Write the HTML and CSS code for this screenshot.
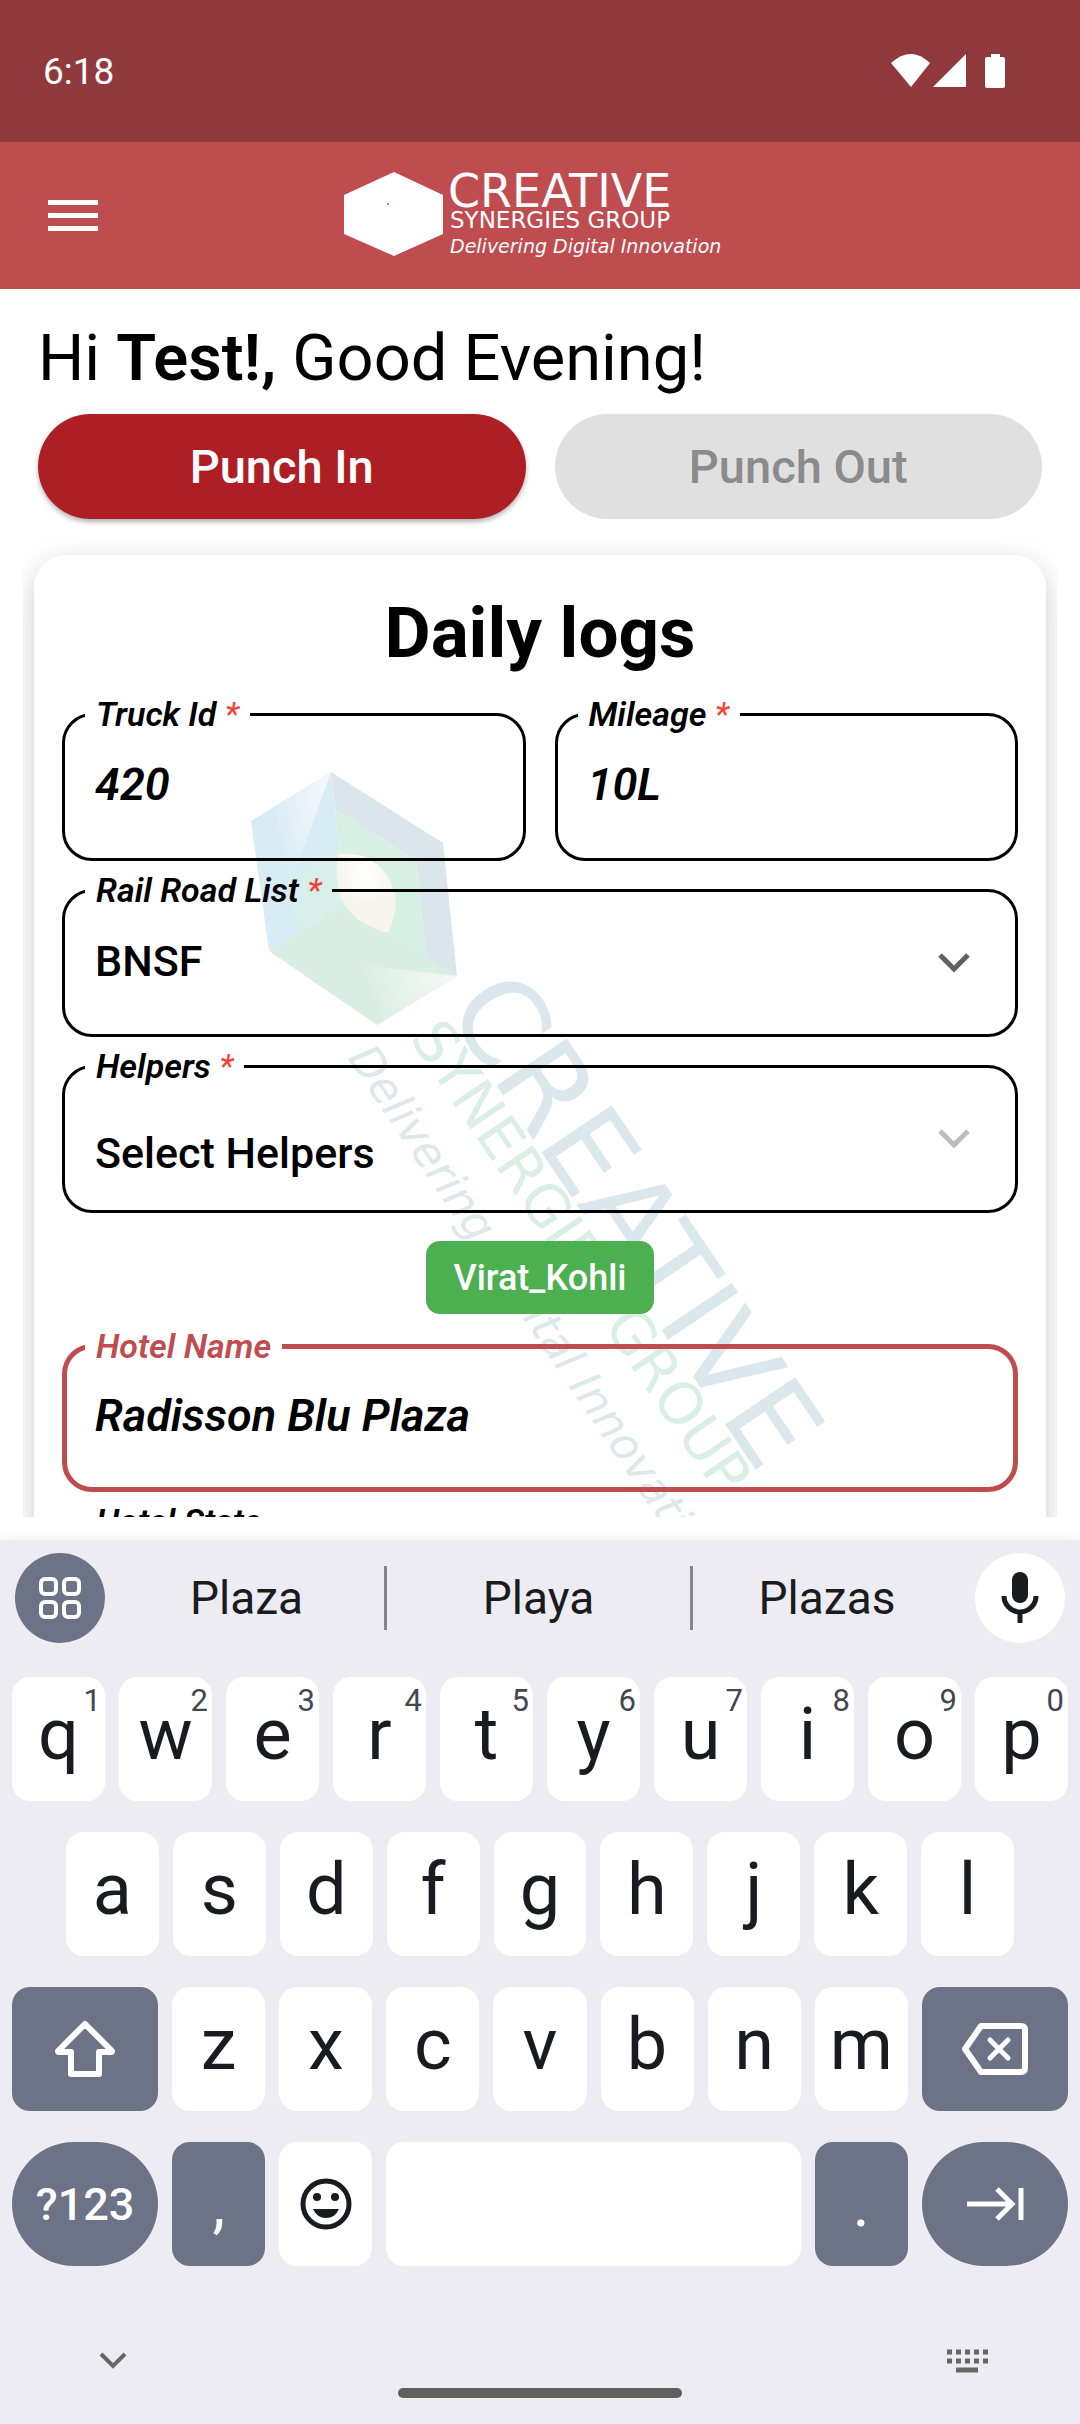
FILE: index.html
```html
<!DOCTYPE html>
<html lang="en">
<head>
<meta charset="utf-8">
<meta name="viewport" content="width=device-width">
<title>Daily logs</title>
<link rel="stylesheet" href="styles.css">
</head>
<body>
<div class="status">
  <span>6:18</span>
  <svg class="status-icons" width="116" height="36" viewBox="0 0 116 36" fill="#fff" aria-hidden="true">
    <path d="M0 10Q20-8 39 10L20 34Z"/>
    <path d="M75 1V34H42Z"/>
    <path d="M100 1h9v3h3q2 0 2 2v27q0 2-2 2H96q-2 0-2-2V6q0-2 2-2h4z"/>
  </svg>
</div>
<header class="appbar">
  <button class="menu" aria-label="Menu"><i></i><i></i><i></i></button>
  <svg class="logo" width="392" height="90" viewBox="0 0 392 90" fill="#fff" role="img">
    <path d="M50 1 99 24v39L50 85 0 63V24Z"/>
    <circle cx="44" cy="33" r="1" fill="#bf4c4f"/>
    <text class="brand" x="104" y="36" font-size="46">CREATIVE</text>
    <text class="brand" x="106" y="57" font-size="23">SYNERGIES GROUP</text>
    <text class="brand tagline" x="106" y="82" font-size="19">Delivering Digital Innovation</text>
  </svg>
</header>
<main>
  <h1 class="greeting">Hi <b>Test!,</b> Good Evening!</h1>
  <div class="punch">
    <button class="pill pill-in">Punch In</button>
    <button class="pill pill-out" disabled>Punch Out</button>
  </div>
  <div class="scroller">
    <form class="card">
      <svg class="watermark" viewBox="0 0 1012 965" aria-hidden="true">
        <defs>
          <linearGradient id="sky" x1="0" y1=".6" x2="1" y2=".3"><stop offset=".3" stop-color="#d8ecf5"/><stop offset="1" stop-color="#f6f7fc"/></linearGradient>
          <linearGradient id="mint" x1="0" y1=".5" x2="1" y2=".3"><stop offset="0" stop-color="#d8eee4"/><stop offset="1" stop-color="#f7f8f4"/></linearGradient>
          <radialGradient id="pearl" cx=".5" cy=".25" r=".5"><stop offset="0" stop-color="#fff"/><stop offset="1" stop-color="#f5f5ee"/></radialGradient>
        </defs>
        <g transform="translate(-34 -555)">
          <path fill="#d8ecf5" d="M251 821 331 772 345 905 269 951Z"/>
          <path fill="url(#sky)" d="M251 821 331 772 302 853 290 880Z"/>
          <path fill="#d8efec" d="M339 850 296 872Q285 905 302 931L345 905Z"/>
          <path fill="#dae6ec" d="M331 772 443 843 457 976 426 957 416 860 335 809Z"/>
          <path fill="#d8f0e3" d="M335 809 416 860 426 957 385 935 345 905Z"/>
          <path fill="#d8eee3" d="M269 951 345 905 388 933 457 976 377 1025Z"/>
          <path fill="url(#mint)" d="M363 965 457 976 384 1020Z"/>
          <path fill="url(#pearl)" d="M338 854Q372 850 390 880 402 905 388 933 355 925 341 899 334 876 338 854Z"/>
          <g class="brand">
            <text transform="translate(445 1009) rotate(56)" font-size="116" fill="#dae7ed">CREATIVE</text>
            <text transform="translate(409 1038) rotate(56)" font-size="58" fill="#daefe3">SYNERGIES GROUP</text>
            <text class="tagline" transform="translate(347 1058) rotate(56)" font-size="44" fill="#dce8ea">Delivering Digital Innovation</text>
          </g>
        </g>
      </svg>
      <h2>Daily logs</h2>
      <div class="pair">
        <fieldset class="field">
          <legend><label for="truck">Truck Id <em>*</em></label></legend>
          <input id="truck" value="420">
        </fieldset>
        <fieldset class="field">
          <legend><label for="mileage">Mileage <em>*</em></label></legend>
          <input id="mileage" value="10L">
        </fieldset>
      </div>
      <fieldset class="field">
        <legend><label for="rail">Rail Road List <em>*</em></label></legend>
        <select id="rail"><option>BNSF</option></select>
        <svg class="chevron" width="36" height="24" viewBox="0 0 36 24"><path d="M4 4 18 18 32 4"/></svg>
      </fieldset>
      <fieldset class="field">
        <legend><label for="helpers">Helpers <em>*</em></label></legend>
        <select id="helpers" class="low"><option>Select Helpers</option></select>
        <svg class="chevron faint" width="36" height="24" viewBox="0 0 36 24"><path d="M4 4 18 18 32 4"/></svg>
      </fieldset>
      <button type="button" class="chip">Virat_Kohli</button>
      <fieldset class="field active">
        <legend><label for="hotel">Hotel Name</label></legend>
        <input id="hotel" value="Radisson Blu Plaza">
      </fieldset>
      <fieldset class="field">
        <legend><label for="state">Hotel State</label></legend>
        <input id="state">
      </fieldset>
    </form>
  </div>
</main>
<section class="keyboard" aria-label="Keyboard">
  <div class="strip">
    <button class="round dark" aria-label="Keyboard menu">
      <svg width="44" height="44" viewBox="0 0 44 44" fill="none" stroke="#fff" stroke-width="4"><rect x="3" y="3" width="15" height="15" rx="4"/><rect x="26" y="3" width="15" height="15" rx="4"/><rect x="3" y="26" width="15" height="15" rx="4"/><rect x="26" y="26" width="15" height="15" rx="4"/></svg>
    </button>
    <div class="words"><button>Plaza</button><button>Playa</button><button>Plazas</button></div>
    <button class="round" aria-label="Voice input">
      <svg width="40" height="52" viewBox="0 0 40 52" fill="none" stroke="#1a1b20" stroke-width="5"><rect x="12" y="0" width="16" height="31" rx="8" fill="#1a1b20" stroke="none"/><path d="M4 24a16 16 0 0 0 32 0M20 40v11"/></svg>
    </button>
  </div>
  <div class="row">
    <button>q<sup>1</sup></button><button>w<sup>2</sup></button><button>e<sup>3</sup></button><button>r<sup>4</sup></button><button>t<sup>5</sup></button><button>y<sup>6</sup></button><button>u<sup>7</sup></button><button>i<sup>8</sup></button><button>o<sup>9</sup></button><button>p<sup>0</sup></button>
  </div>
  <div class="row inset">
    <button>a</button><button>s</button><button>d</button><button>f</button><button>g</button><button>h</button><button>j</button><button>k</button><button>l</button>
  </div>
  <div class="row">
    <button class="dark wide" aria-label="Shift">
      <svg width="62" height="60" viewBox="0 0 62 60" fill="none" stroke="#fff" stroke-width="6" stroke-linejoin="round"><path d="M31 5 58 32Q58 33 57 33H45V55H17V33H5Q4 33 4 32Z"/></svg>
    </button>
    <button>z</button><button>x</button><button>c</button><button>v</button><button>b</button><button>n</button><button>m</button>
    <button class="dark wide" aria-label="Backspace">
      <svg width="68" height="54" viewBox="0 0 68 54" fill="none" stroke="#fff" stroke-width="6" stroke-linejoin="round"><path d="M20 4H60Q64 4 64 8V46Q64 50 60 50H20L4 27Z"/><path stroke-width="5" stroke-linecap="round" d="M29 18 47 36M47 18 29 36"/></svg>
    </button>
  </div>
  <div class="row">
    <button class="dark wide oval">?123</button>
    <button class="dark mark">,</button>
    <button aria-label="Emoji">
      <svg width="54" height="54" viewBox="0 0 54 54" fill="#1a1b20"><circle cx="27" cy="27" r="23" fill="none" stroke="#1a1b20" stroke-width="5"/><circle cx="18" cy="20" r="4"/><circle cx="36" cy="20" r="4"/><path d="M14 32H40Q36 41 27 41T14 32Z"/></svg>
    </button>
    <button class="space" aria-label="Space"></button>
    <button class="dark mark">.</button>
    <button class="dark wide oval" aria-label="Next field">
      <svg width="58" height="36" viewBox="0 0 58 36" fill="none" stroke="#fff" stroke-width="5"><path d="M1 18H46M31 3 46 18 31 33M55 2V34"/></svg>
    </button>
  </div>
  <div class="nav">
    <button aria-label="Hide keyboard"><svg width="28" height="18" viewBox="0 0 28 18" fill="none" stroke="#666" stroke-width="4"><path d="M2 2 14 14 26 2"/></svg></button>
    <button aria-label="Switch keyboard"><svg width="42" height="26" viewBox="0 0 42 26" fill="none" stroke="#666" stroke-width="5"><path stroke-dasharray="5 4" d="M1 4H42M1 13H42"/><path d="M10 22H32"/></svg></button>
  </div>
  <div class="home"></div>
</section>
</body>
</html>
```
FILE: styles.css
```css
* { box-sizing: border-box; }
body {
  margin: 0;
  height: 100vh;
  display: flex;
  flex-direction: column;
  overflow: hidden;
  background: #fff;
  color: #000;
  font-family: Roboto, "Liberation Sans", sans-serif;
}
button, input, select { font: inherit; color: inherit; border: 0; background: none; padding: 0; margin: 0; }
svg { display: block; }

.status {
  flex: none;
  height: 142px;
  padding: 0 73px 0 43px;
  display: flex;
  align-items: center;
  justify-content: space-between;
  background: #8f393c;
  color: #fff;
  font-size: 37px;
}
.appbar {
  flex: none;
  height: 147px;
  padding: 0 48px;
  display: grid;
  grid-template-columns: 1fr auto 1fr;
  align-items: center;
  background: #bf4c4f;
}
.menu { width: 50px; display: grid; gap: 8px; }
.menu i { height: 5px; background: #fff; }
.logo { overflow: visible; }
.brand { font-family: "DejaVu Sans", sans-serif; }
.tagline { font-style: italic; }

main {
  flex: 1;
  min-height: 0;
  display: flex;
  flex-direction: column;
  padding: 31px 23px 23px;
}
.greeting { margin: 0 0 18px 15px; font-size: 65px; line-height: 76px; font-weight: 400; }
.greeting b { font-weight: 600; }
.punch { display: grid; grid-template-columns: 1fr 1fr; gap: 29px; padding: 0 15px; }
.pill { height: 105px; border-radius: 53px; font-size: 47px; font-weight: 500; }
.pill-in { background: #ad1f24; color: #fff; box-shadow: 0 3px 5px rgba(0,0,0,.3); }
.pill-out { background: #e0e0e0; color: #8b8b8b; }

.scroller { flex: 1; min-height: 0; overflow: hidden; padding: 36px 11px 0; }
.card {
  position: relative;
  isolation: isolate;
  display: flex;
  flex-direction: column;
  gap: 11px;
  padding: 36px 28px;
  border-radius: 32px;
  background: #fff;
  box-shadow: 0 10px 30px rgba(0,0,0,.2);
}
.watermark { position: absolute; z-index: -1; top: 0; left: 0; width: 100%; overflow: visible; }
h2 { margin: 0 0 10px; text-align: center; font-size: 71px; line-height: 84px; }
.pair { display: grid; grid-template-columns: 1fr 1fr; gap: 29px; }
.field {
  position: relative;
  min-width: 0;
  margin: 0;
  padding: 23px 20px 43px;
  border: 3px solid #000;
  border-radius: 30px;
}
legend { padding: 0 11px; font-size: 34px; line-height: 36px; font-weight: 600; font-style: italic; }
legend em { color: #f44336; font-weight: 400; }
.field input, .field select {
  display: block;
  width: 100%;
  height: 60px;
  padding: 0 10px;
  font-size: 45px;
  line-height: 60px;
  outline: 0;
}
.field input { font-weight: 600; font-style: italic; }
.field select { appearance: none; font-weight: 500; font-size: 43px; }
.field:has(.low) { padding: 39px 20px 27px; }
.chevron { position: absolute; right: 43px; top: 43px; fill: none; stroke: #616161; stroke-width: 5; }
.faint { stroke: #bdbdbd; }
.active { padding: 22px 18px 41px; border: 5px solid #bf4c4f; }
.active legend { color: #bf4c4f; }
.chip {
  align-self: center;
  height: 73px;
  margin: 17px 0 3px;
  padding: 0 27px;
  border-radius: 14px;
  background: #4caf50;
  color: #fff;
  font-size: 36px;
  font-weight: 500;
}

.keyboard {
  flex: none;
  padding: 13px 12px 26px;
  background: #edecf3;
  box-shadow: 0 -2px 12px rgba(0,0,0,.06);
  color: #1a1b20;
}
.strip { display: flex; align-items: center; margin: 0 3px 34px; }
.round { width: 90px; height: 90px; border-radius: 50%; background: #fff; display: grid; place-items: center; }
.words { flex: 1; display: grid; grid-template-columns: 275fr 306fr 271fr; margin: 0 14px 0 4px; font-size: 46px; }
.words button { height: 64px; }
.words button + button { border-left: 3px solid #84848a; }
.row { display: flex; gap: 14px; margin-bottom: 31px; }
.inset { padding: 0 54px; }
.row button {
  position: relative;
  flex: 93 1 0;
  height: 124px;
  padding-bottom: 10px;
  display: flex;
  align-items: center;
  justify-content: center;
  border-radius: 18px;
  background: #fff;
  font-size: 72px;
}
.row button:has(svg) { padding: 0; }
.row sup { position: absolute; right: 4px; top: 8px; font-size: 31px; line-height: 31px; color: #44464f; }
.row .wide { flex-grow: 146; }
.row .space { flex-grow: 414; }
.row .oval { padding: 0; border-radius: 62px; font-size: 45px; font-weight: 500; }
.row .mark { padding: 0; font-size: 64px; }
.keyboard .dark { background: #6d7387; color: #fff; }
.nav { display: flex; justify-content: space-between; align-items: center; margin: 82px 80px 14px 87px; }
.home { width: 284px; height: 10px; margin: 0 auto; border-radius: 5px; background: #5f5f5f; }
```
